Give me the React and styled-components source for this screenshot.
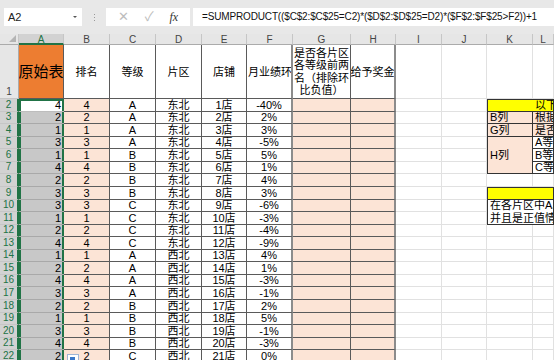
import React from 'react';
import styled, { createGlobalStyle } from 'styled-components';

const GlobalStyle = createGlobalStyle`
  html, body { margin: 0; padding: 0; background: #fff; overflow: hidden; }
  body { font-family: "Liberation Sans", "Noto Sans CJK SC", sans-serif; }
`;

const GREEN = '#217346';
const DARK = '#5a5a5a';
const GRID = '#e1e1e1';
const PEACH = '#fce4d6';
const YELLOW = '#ffff00';

const Page = styled.div`
  width: 554px;
  height: 360px;
  overflow: hidden;
  position: relative;
  background: #e8e8e8;
`;

const Toolbar = styled.div`
  height: 34px;
  box-sizing: border-box;
  padding: 8px 0 0 4px;
  display: flex;
  align-items: flex-start;
`;

const NameBox = styled.div`
  width: 78px;
  height: 18px;
  box-sizing: border-box;
  background: #fff;
  display: flex;
  align-items: center;
  justify-content: space-between;
  padding: 0 5px 0 4px;
  font-size: 11px;
  color: #222;
`;

const Caret = styled.span`
  width: 0;
  height: 0;
  border-left: 2px solid transparent;
  border-right: 2px solid transparent;
  border-top: 2px solid #555;
`;

const Dots = styled.div`
  width: 24px;
  height: 18px;
  display: flex;
  flex-direction: column;
  align-items: center;
  justify-content: center;
  gap: 2px;
  span { width: 1px; height: 1px; background: #999; }
`;

const FxButtons = styled.div`
  width: 84px;
  height: 18px;
  background: #fff;
  display: flex;
  align-items: center;
  justify-content: space-around;
  padding: 0 4px;
  box-sizing: border-box;
  margin-right: 3px;
`;

const FxBtn = styled.span`
  color: ${p => (p.$on ? '#333' : '#bdbdbd')};
  font-size: ${p => (p.$on ? '12px' : '13px')};
  font-family: ${p => (p.$on ? '"Liberation Serif", serif' : 'inherit')};
  font-style: ${p => (p.$on ? 'italic' : 'normal')};
  line-height: 18px;
`;

const Formula = styled.div`
  flex: 1;
  height: 18px;
  background: #fff;
  padding-left: 9px;
  font-size: 10px;
  letter-spacing: -0.15px;
  line-height: 18px;
  color: #111;
  white-space: nowrap;
  overflow: hidden;
`;

const Sheet = styled.div`
  display: grid;
  grid-template-columns: 19px 45px 46px 46px 46px 45px 46px 58px 45px 46px 45px 46px 1fr;
  grid-template-rows: 11px 54px;
  grid-auto-rows: 12.57px;
  background: #fff;
`;

const Corner = styled.div`
  grid-row: 1;
  grid-column: 1;
  background: #e6e6e6;
  border-right: 1px solid #c6c6c6;
  border-bottom: 1px solid #ababab;
  box-sizing: border-box;
  position: relative;
  &::after {
    content: '';
    position: absolute;
    right: 2px;
    bottom: 2px;
    border-left: 7px solid transparent;
    border-bottom: 7px solid #b4b4b4;
  }
`;

const ColHead = styled.div`
  grid-row: 1;
  grid-column: ${p => p.$c};
  box-sizing: border-box;
  background: ${p => (p.$sel ? '#d2d2d2' : '#e6e6e6')};
  color: ${p => (p.$sel ? GREEN : '#444')};
  border-right: 1px solid #c6c6c6;
  border-bottom: ${p => (p.$sel ? `2px solid ${GREEN}` : '1px solid #ababab')};
  font-size: 10px;
  line-height: 11px;
  text-align: center;
`;

const RowHead = styled.div`
  grid-row: ${p => p.$r};
  grid-column: 1;
  box-sizing: border-box;
  background: ${p => (p.$sel ? '#d2d2d2' : '#e6e6e6')};
  color: ${p => (p.$sel ? GREEN : '#444')};
  border-right: ${p => (p.$sel ? `2px solid ${GREEN}` : '1px solid #ababab')};
  border-bottom: 1px solid #c6c6c6;
  font-size: 10px;
  display: flex;
  align-items: flex-end;
  justify-content: center;
  line-height: 12px;
`;

const Cell = styled.div`
  grid-row: ${p => p.$r} / span ${p => p.$rs || 1};
  grid-column: ${p => p.$c} / span ${p => p.$cs || 1};
  box-sizing: border-box;
  display: flex;
  flex-direction: column;
  justify-content: ${p => p.$valign || 'flex-end'};
  align-items: ${p => p.$align || 'flex-start'};
  padding: ${p => p.$pad || '0 2px'};
  overflow: hidden;
  white-space: nowrap;
  font-size: ${p => p.$size || '11px'};
  line-height: ${p => p.$lh || '12px'};
  color: #000;
  background: ${p => p.$bg || '#fff'};
  border-right: ${p => p.$br || `1px solid ${p.$bd || GRID}`};
  border-bottom: 1px solid ${p => p.$bd || GRID};
  border-top: ${p => p.$bt || 'none'};
  border-left: ${p => p.$bl || 'none'};
  box-shadow: ${p => p.$shadow || 'none'};
`;

const QuickIcon = styled.div`
  position: absolute;
  left: 67px;
  top: 354px;
  width: 12px;
  height: 9px;
  background: #fff;
  border: 1px solid #9fb5d6;
  box-sizing: border-box;
  &::after {
    content: '';
    position: absolute;
    left: 2px;
    top: 2px;
    width: 5px;
    height: 3px;
    background: #3c78c8;
  }
`;

const LETTERS = ['A', 'B', 'C', 'D', 'E', 'F', 'G', 'H', 'I', 'J', 'K', 'L'];

const RANK = [4, 2, 1, 3, 1, 4, 2, 3, 3, 1, 2, 4, 1, 2, 4, 3, 2, 1, 3, 4, 2];
const GRADE = 'AAAABBBBCCCCAAAABBBBC'.split('');
const PCT = [-40, 2, 3, -5, 5, 1, 4, 3, -6, -3, -4, -9, 4, 1, -3, -1, 2, 5, -1, -3, 0];

const HEAD = ['排名', '等级', '片区', '店铺'];
const THICK = '2px solid #8c8c8c';
const SEL_SIDES = `inset 2px 0 ${GREEN}, inset -2px 0 ${GREEN}`;

const LAST_ROW = 23;

function buildCells() {
  const cells = [];
  const g = r => r + 1; // excel row -> grid row

  // row 1 headers
  cells.push(
    <Cell key="A1" $r={g(1)} $c={2} $bg="#ed7d31" $bd={DARK} $valign="center" $align="center" $size="15px" $lh="18px" $pad="0">
      原始表
    </Cell>
  );
  HEAD.forEach((t, i) => (
    cells.push(
      <Cell key={`h${i}`} $r={g(1)} $c={3 + i} $bd={DARK} $valign="center" $align="center">{t}</Cell>
    )
  ));
  cells.push(
    <Cell key="F1" $r={g(1)} $c={7} $bd={DARK} $br={THICK} $valign="center" $pad="0 0 0 1px">月业绩环比</Cell>,
    <Cell key="G1" $r={g(1)} $c={8} $bd={DARK} $valign="center" $align="center" $lh="12.5px" $pad="0">
      <span>是否各片区</span>
      <span>各等级前两</span>
      <span>名（排除环</span>
      <span>比负值）</span>
    </Cell>,
    <Cell key="H1" $r={g(1)} $c={9} $bd={DARK} $br={THICK} $valign="center" $align="center">给予奖金</Cell>
  );
  [10, 11, 12, 13].forEach(c => cells.push(<Cell key={`e1-${c}`} $r={g(1)} $c={c} />));

  // data rows
  for (let r = 2; r <= LAST_ROW; r++) {
    const i = r - 2;
    const has = i < RANK.length;
    cells.push(
      <Cell
        key={`A${r}`}
        $r={g(r)}
        $c={2}
        $bg={r === 2 ? '#fff' : '#c8c8c8'}
        $bd={r === 2 ? '#bdbdbd' : '#a9a9a9'}
        $br="none"
        $align="flex-end"
        $pad="0 3px"
        $shadow={r === 2 ? `${SEL_SIDES}, inset 0 2px ${GREEN}` : SEL_SIDES}
      >
        {has ? RANK[i] : ''}
      </Cell>,
      <Cell key={`B${r}`} $r={g(r)} $c={3} $bg={PEACH} $bd={DARK} $align="center">{has ? RANK[i] : ''}</Cell>,
      <Cell key={`C${r}`} $r={g(r)} $c={4} $bd={DARK} $align="center">{has ? GRADE[i] : ''}</Cell>,
      <Cell key={`D${r}`} $r={g(r)} $c={5} $bd={DARK} $align="center">{has ? (i < 12 ? '东北' : '西北') : ''}</Cell>,
      <Cell key={`E${r}`} $r={g(r)} $c={6} $bd={DARK} $align="center">{has ? `${i + 1}店` : ''}</Cell>,
      <Cell key={`F${r}`} $r={g(r)} $c={7} $bd={DARK} $br={THICK} $align="center">{has ? `${PCT[i]}%` : ''}</Cell>,
      <Cell key={`G${r}`} $r={g(r)} $c={8} $bg={PEACH} $bd={DARK} />,
      <Cell key={`H${r}`} $r={g(r)} $c={9} $bg={PEACH} $bd={DARK} $br={THICK} />,
      <Cell key={`I${r}`} $r={g(r)} $c={10} />,
      <Cell key={`J${r}`} $r={g(r)} $c={11} />
    );
  }

  // notes block in K:L
  const box = '#333';
  cells.push(
    <Cell key="K2" $r={g(2)} $c={12} $cs={2} $bg={YELLOW} $bd={box} $bt={`1px solid ${box}`} $bl={`1px solid ${box}`} $pad="0 0 0 47px">以下为说明</Cell>,
    <Cell key="K3" $r={g(3)} $c={12} $bg={PEACH} $bd={box} $bl={`1px solid ${box}`}>B列</Cell>,
    <Cell key="L3" $r={g(3)} $c={13} $bg={PEACH} $bd={box}>根据原始表数据排名</Cell>,
    <Cell key="K4" $r={g(4)} $c={12} $bg={PEACH} $bd={box} $bl={`1px solid ${box}`}>G列</Cell>,
    <Cell key="L4" $r={g(4)} $c={13} $bg={PEACH} $bd={box}>是否各片区各等级前两名</Cell>,
    <Cell key="K5" $r={g(5)} $rs={3} $c={12} $bg={PEACH} $bd={box} $bl={`1px solid ${box}`} $valign="center">H列</Cell>,
    <Cell key="L5" $r={g(5)} $c={13} $bd={box}>A等级第一名奖金</Cell>,
    <Cell key="L6" $r={g(6)} $c={13} $bd={box}>B等级第一名奖金</Cell>,
    <Cell key="L7" $r={g(7)} $c={13} $bd={box}>C等级第一名奖金</Cell>,
    <Cell key="K8" $r={g(8)} $c={12} />,
    <Cell key="L8" $r={g(8)} $c={13} />,
    <Cell key="K9" $r={g(9)} $c={12} $cs={2} $bg={YELLOW} $bd={box} $bt={`1px solid ${box}`} $bl={`1px solid ${box}`} />,
    <Cell key="K10" $r={g(10)} $rs={2} $c={12} $cs={2} $bd={box} $bl={`1px solid ${box}`} $valign="center" $lh="12.5px">
      <span>在各片区中A、B、C各等级前两名</span>
      <span>并且是正值情况下给予奖金</span>
    </Cell>
  );
  for (let r = 12; r <= LAST_ROW; r++) {
    cells.push(<Cell key={`K${r}`} $r={g(r)} $c={12} />, <Cell key={`L${r}`} $r={g(r)} $c={13} />);
  }
  return cells;
}

export default function App() {
  const rows = [];
  for (let r = 1; r <= LAST_ROW; r++) {
    rows.push(<RowHead key={r} $r={r + 1} $sel={r > 1}>{r}</RowHead>);
  }
  return (
    <Page>
      <GlobalStyle />
      <Toolbar>
        <NameBox>
          A2
          <Caret />
        </NameBox>
        <Dots>
          <span />
          <span />
          <span />
        </Dots>
        <FxButtons>
          <FxBtn>✕</FxBtn>
          <FxBtn>✓</FxBtn>
          <FxBtn $on>fx</FxBtn>
        </FxButtons>
        <Formula>=SUMPRODUCT(($C$2:$C$25=C2)*($D$2:$D$25=D2)*($F$2:$F$25&gt;F2))+1</Formula>
      </Toolbar>
      <Sheet>
        <Corner />
        {LETTERS.map((l, i) => (
          <ColHead key={l} $c={i + 2} $sel={l === 'A'}>{l}</ColHead>
        ))}
        {rows}
        {buildCells()}
      </Sheet>
      <QuickIcon />
    </Page>
  );
}
